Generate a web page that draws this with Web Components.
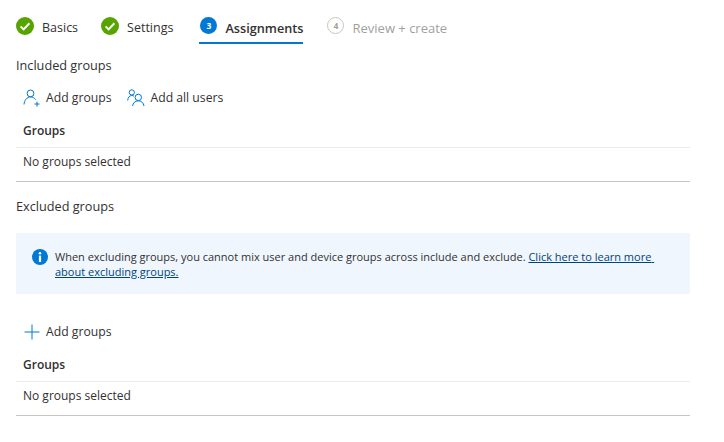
<!DOCTYPE html>
<html>
<head>
<meta charset="utf-8">
<style>
  html, body { margin: 0; background: #fff; }
  body { font: 12px "Open Sans", "Noto Sans", sans-serif; color: #323130; }
</style>
</head>
<body>
<wizard-page>
  <wizard-tabs>
    <wizard-tab state="done" label="Basics"></wizard-tab>
    <wizard-tab state="done" label="Settings"></wizard-tab>
    <wizard-tab state="active" num="3" label="Assignments"></wizard-tab>
    <wizard-tab state="todo" num="4" label="Review + create"></wizard-tab>
  </wizard-tabs>
  <section-title style="margin-top:12px">Included groups</section-title>
  <cmd-bar>
    <cmd-button icon="user-add">Add groups</cmd-button>
    <cmd-button icon="users">Add all users</cmd-button>
  </cmd-bar>
  <groups-table></groups-table>
  <section-title style="margin-top:15px">Excluded groups</section-title>
  <info-box>When excluding groups, you cannot mix user and device groups across include and exclude. <a href="#">Click here to learn more about excluding groups.</a></info-box>
  <cmd-bar style="margin-top:14px">
    <cmd-button icon="plus">Add groups</cmd-button>
  </cmd-bar>
  <groups-table></groups-table>
</wizard-page>

<script>
const ICONS = {
  'user-add': `<svg width="18" height="18" viewBox="0 0 18 18" fill="none" stroke="#0078d4" stroke-width="1"><circle cx="7.5" cy="4.4" r="3.4"/><path d="M1 15.5c.3-4.2 3-7.6 6.5-7.6 2.2 0 4 1 5.2 2.8"/><path d="M11.5 15h5M14 12.6v5"/></svg>`,
  'users': `<svg width="18" height="18" viewBox="0 0 18 18" fill="none" stroke="#0078d4" stroke-width="1"><circle cx="4.8" cy="3.4" r="2.6"/><path d="M.7 11.5c.2-3 1.8-5 4.1-5 .8 0 1.5.2 2.2.7"/><circle cx="11.3" cy="8.4" r="3.2"/><path d="M5.6 17c.3-3 2.6-5.2 5.7-5.2s5.4 2.2 5.7 5.2"/></svg>`,
  'plus': `<svg width="18" height="18" viewBox="0 0 18 18" fill="none" stroke="#0078d4" stroke-width="1"><path d="M1.5 9h15M9 1.5v15"/></svg>`
};

class WizardPage extends HTMLElement {
  constructor() {
    super();
    this.attachShadow({mode: 'open'}).innerHTML = `
      <style>:host { display: block; box-sizing: border-box; width: 690px; padding: 13px 0 0 16px; }</style>
      <slot></slot>`;
  }
}

class WizardTabs extends HTMLElement {
  constructor() {
    super();
    this.attachShadow({mode: 'open'}).innerHTML = `
      <style>:host { display: flex; gap: 23px; height: 31px; }</style>
      <slot></slot>`;
  }
}

class WizardTab extends HTMLElement {
  constructor() {
    super();
    const state = this.getAttribute('state');
    const num = this.getAttribute('num');
    let badge;
    if (state === 'done') {
      badge = `<svg width="18" height="18" viewBox="0 0 18 18"><circle cx="9" cy="9" r="9" fill="#57a300"/><path d="M4.6 9.4l3 3 5.8-6.2" fill="none" stroke="#fff" stroke-width="2"/></svg>`;
    } else {
      badge = `<span class="num">${num}</span>`;
    }
    this.attachShadow({mode: 'open'}).innerHTML = `
      <style>
        :host { display: flex; align-items: flex-start; gap: 8px; height: 31px; box-sizing: border-box; }
        :host([state=active]) { border-bottom: 2px solid #0078d4; margin-left: 3px; padding: 0 0 0 1px; }
        :host([state=todo]) { margin-left: 1px; }
        svg { display: block; flex: none; margin-top: 4px; }
        .num { box-sizing: border-box; width: 17px; height: 17px; margin-top: 4px; border-radius: 50%; font-size: 8.5px; font-weight: 700; display: flex; align-items: center; justify-content: center; }
        :host([state=active]) .num { background: #0078d4; color: #fff; }
        :host([state=todo]) .num { border: 1px solid #c8c6c4; color: #a19f9d; }
        .label { font-size: 12.5px; line-height: 18px; margin-top: 6px; }
        :host([state=active]) .label { font-size: 12.7px; font-weight: 600; }
        :host([state=todo]) .label { font-size: 13px; color: #a19f9d; }
      </style>
      ${badge}<span class="label">${this.getAttribute('label')}</span>`;
  }
}

class SectionTitle extends HTMLElement {
  constructor() {
    super();
    this.attachShadow({mode: 'open'}).innerHTML = `
      <style>:host { display: block; font-size: 12.7px; line-height: 18px; }</style>
      <slot></slot>`;
  }
}

class CmdBar extends HTMLElement {
  constructor() {
    super();
    this.attachShadow({mode: 'open'}).innerHTML = `
      <style>:host { display: flex; gap: 16px; padding: 15px 0 0 7px; height: 39px; box-sizing: border-box; align-items: flex-start; }</style>
      <slot></slot>`;
  }
}

class CmdButton extends HTMLElement {
  constructor() {
    super();
    this.attachShadow({mode: 'open'}).innerHTML = `
      <style>
        :host { display: inline-flex; align-items: center; gap: 5px; line-height: 18px; font-size: 12.2px; }
        svg { display: block; }
      </style>
      ${ICONS[this.getAttribute('icon')]}<slot></slot>`;
  }
}

class GroupsTable extends HTMLElement {
  constructor() {
    super();
    this.attachShadow({mode: 'open'}).innerHTML = `
      <style>
        :host { display: block; border-bottom: 1px solid #c8c6c4; }
        div { padding-left: 7px; box-sizing: border-box; display: flex; align-items: center; }
        .head { height: 35px; font-weight: 600; border-bottom: 1px solid #edebe9; }
        .row { height: 33px; padding-bottom: 6px; }
      </style>
      <div class="head">Groups</div>
      <div class="row">No groups selected</div>`;
  }
}

class InfoBox extends HTMLElement {
  constructor() {
    super();
    this.attachShadow({mode: 'open'}).innerHTML = `
      <style>
        :host { display: flex; gap: 7px; margin-top: 18px; height: 61px; box-sizing: border-box; padding: 15.5px 30px 0 16px; background: #eff6fe; font-size: 11px; line-height: 15px; }
        svg { display: block; flex: none; margin-top: 0.5px; }
        ::slotted(a) { color: #004578; text-decoration: underline; white-space: pre-wrap; }
      </style>
      <svg width="16" height="16" viewBox="0 0 16 16"><circle cx="8" cy="8" r="8" fill="#0078d4"/><circle cx="8" cy="4.2" r="1.3" fill="#fff"/><rect x="6.9" y="6.6" width="2.2" height="6.4" fill="#fff"/></svg>
      <div><slot></slot></div>`;
  }
}

customElements.define('wizard-page', WizardPage);
customElements.define('wizard-tabs', WizardTabs);
customElements.define('wizard-tab', WizardTab);
customElements.define('section-title', SectionTitle);
customElements.define('cmd-bar', CmdBar);
customElements.define('cmd-button', CmdButton);
customElements.define('groups-table', GroupsTable);
customElements.define('info-box', InfoBox);
</script>
</body>
</html>
